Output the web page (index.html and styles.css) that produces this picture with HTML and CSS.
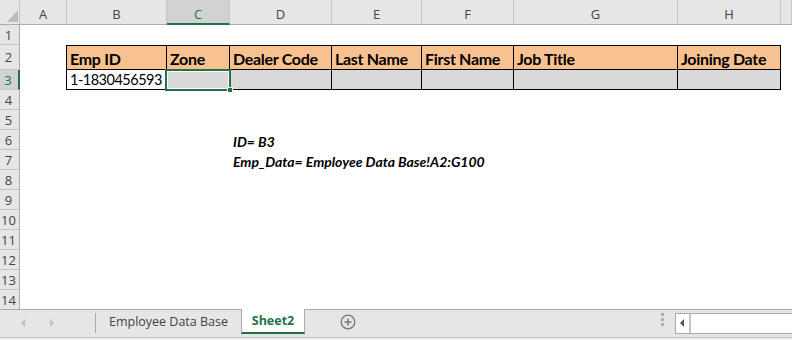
FILE: index.html
```html
<!DOCTYPE html>
<html lang="en">
<head>
  <meta charset="UTF-8" />
  <title>Sheet2</title>
  <link rel="stylesheet" href="styles.css">
</head>
<body>
  <div class="sheet">
    <!-- column headers -->
    <div class="row colhead">
      <div class="corner"><span class="tri"></span></div>
      <div class="ch">A</div>
      <div class="ch">B</div>
      <div class="ch sel">C</div>
      <div class="ch">D</div>
      <div class="ch">E</div>
      <div class="ch">F</div>
      <div class="ch">G</div>
      <div class="ch">H</div>
      <div class="ch"></div>
    </div>

    <div class="row"><div class="rh">1</div></div>

    <div class="row tall">
      <div class="rh">2</div>
      <div></div>
      <div class="cell th first">Emp ID</div>
      <div class="cell th">Zone</div>
      <div class="cell th">Dealer Code</div>
      <div class="cell th">Last Name</div>
      <div class="cell th">First Name</div>
      <div class="cell th">Job Title</div>
      <div class="cell th">Joining Date</div>
    </div>

    <div class="row">
      <div class="rh rsel">3</div>
      <div></div>
      <div class="cell td first">1-1830456593</div>
      <div class="cell td grey active"><span class="handle"></span></div>
      <div class="cell td grey"></div>
      <div class="cell td grey"></div>
      <div class="cell td grey"></div>
      <div class="cell td grey"></div>
      <div class="cell td grey"></div>
    </div>

    <div class="row"><div class="rh">4</div></div>
    <div class="row"><div class="rh">5</div></div>
    <div class="row">
      <div class="rh">6</div>
      <div class="note">ID= B3</div>
    </div>
    <div class="row">
      <div class="rh">7</div>
      <div class="note">Emp_Data= Employee Data Base!A2:G100</div>
    </div>
    <div class="row"><div class="rh">8</div></div>
    <div class="row"><div class="rh">9</div></div>
    <div class="row"><div class="rh">10</div></div>
    <div class="row"><div class="rh">11</div></div>
    <div class="row"><div class="rh">12</div></div>
    <div class="row"><div class="rh">13</div></div>
    <div class="row"><div class="rh">14</div></div>
  </div>

  <div class="tabbar">
    <div class="tabnav">
      <span class="arrow left"></span>
      <span class="arrow right"></span>
    </div>
    <div class="tab">Employee Data Base</div>
    <div class="tab active">Sheet2</div>
    <div class="addsheet">
      <svg width="16" height="16" viewBox="0 0 16 16">
        <circle cx="8" cy="8" r="6.8" fill="none" stroke="#777" stroke-width="1.3"/>
        <path d="M8 4.5v7M4.5 8h7" stroke="#777" stroke-width="1.5"/>
      </svg>
    </div>
    <div class="grip"><i></i><i></i><i></i></div>
    <div class="hscroll">
      <span class="sbtn"><span class="sarrow"></span></span>
    </div>
  </div>
  <div class="status"></div>
</body>
</html>
```

FILE: styles.css
```css
*{box-sizing:border-box;margin:0;padding:0}
body{width:792px;height:340px;overflow:hidden;background:#fff;font-family:'Lato','Liberation Sans',sans-serif;color:#000}

/* grid */
.sheet{height:309px;overflow:hidden}
.row{display:grid;grid-template-columns:20px 47px 100px 63px 102px 90px 92px 164px 103px 11px;height:20px}
.row.tall{height:25px}
.colhead{height:25px;background:#e6e6e6;border-bottom:1px solid #ababab}
.corner{position:relative;border-right:1px solid #c6c6c6}
.tri{position:absolute;left:7px;top:10px;width:0;height:0;border-left:11px solid transparent;border-bottom:12px solid #bcbcbc}
.ch{border-right:1px solid #c6c6c6;display:flex;align-items:center;justify-content:center;padding-top:4px;font:13px 'Open Sans',sans-serif;color:#444}
.ch.sel{background:#d2d2d2;border-bottom:2px solid #217346;color:#217346;margin-bottom:-1px}
.rh{background:#e6e6e6;border-right:1px solid #ababab;border-bottom:1px solid #c6c6c6;display:flex;align-items:center;justify-content:center;padding-right:2px;font:13px 'Open Sans',sans-serif;color:#444}
.rh.rsel{background:#d2d2d2;border-right:2px solid #217346;color:#217346}

/* table */
.cell{border-right:1px solid #000;border-bottom:1px solid #000;white-space:nowrap;overflow:hidden;display:flex;align-items:flex-end;padding:0 0 1px 3px}
.cell.first{border-left:1px solid #000;margin-left:-1px}
.th{background:#f8c190;border-top:1px solid #000;font-weight:700;font-size:16px;letter-spacing:-.3px}
.td{font-size:14.5px;letter-spacing:-.5px}
.td.grey{background:#d9d9d9}
.active{position:relative;overflow:visible;border:2px solid #217346;box-shadow:inset 0 0 0 1px #fff;margin:-1px -1px -1px -2px}
.handle{position:absolute;right:-4px;bottom:-4px;width:6px;height:6px;background:#217346;border:1px solid #fff}

.note{grid-column:5 / span 5;white-space:nowrap;font-weight:700;font-style:italic;font-size:14px;padding:3px 0 0 3px}

/* sheet tabs */
.tabbar{height:28px;background:#e6e6e6;border-top:1px solid #ababab;display:flex;align-items:flex-start}
.tabnav{width:96px;height:20px;margin-top:3px;border-right:1px solid #a8a8a8;position:relative}
.arrow{position:absolute;top:6px;width:0;height:0;border-top:4px solid transparent;border-bottom:4px solid transparent}
.arrow.left{left:21px;border-right:4px solid #c0c0c0}
.arrow.right{left:50px;border-left:4px solid #c0c0c0}
.tab{height:24px;width:147px;margin-top:-1px;display:flex;align-items:center;justify-content:center;font:12.5px 'Open Sans',sans-serif;color:#444;padding-right:2px}
.tab.active{width:64px;background:#fff;border:1px solid #ababab;border-top:none;border-bottom:2px solid #217346;color:#217346;font-weight:700;height:25px;padding:0}
.addsheet{margin:4px 0 0 36px;height:16px}
.grip{margin:3px 0 0 auto;width:6px;display:flex;flex-direction:column;align-items:center;gap:2px}
.grip i{width:3px;height:3px;background:#b0b0b0}
.hscroll{margin:3px 0 0 10px;width:117px;height:21px;background:#fff;border:1px solid #ababab;border-right:none;display:flex}
.sbtn{width:15px;height:19px;border-right:2px solid #c6c6c6;position:relative}
.sarrow{position:absolute;left:4px;top:5px;width:0;height:0;border-top:4px solid transparent;border-bottom:4px solid transparent;border-right:4px solid #555}
.status{height:3px;background:#f0f0f0;border-top:1px solid #c6c6c6}
```
